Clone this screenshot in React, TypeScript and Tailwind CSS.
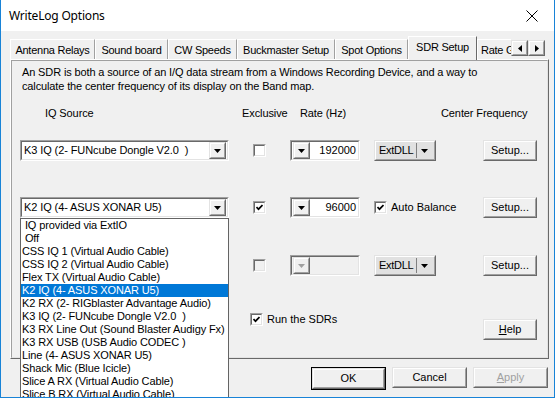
import React from 'react';

const sans = "font-['Liberation_Sans',Arial,sans-serif]";

const Tri = ({ disabled }: { disabled?: boolean }) => (
    <svg width="7" height="4" viewBox="0 0 7 4">
        <path d="M0 0H7L3.5 4Z" fill={disabled ? '#a0a0a0' : '#000'} />
    </svg>
);

const Raised: React.FC<{ className?: string; inner?: string; children?: React.ReactNode }> = ({ className = '', inner = '', children }) => (
    <div className={`border border-t-[#e3e3e3] border-l-[#e3e3e3] border-r-[#696969] border-b-[#696969] bg-[#f0f0f0] ${className}`}>
        <div className={`w-full h-full border border-t-white border-l-white border-r-[#a0a0a0] border-b-[#a0a0a0] flex items-center justify-center ${inner}`}>
            {children}
        </div>
    </div>
);

const Sunken: React.FC<{ className?: string; inner?: string; children?: React.ReactNode }> = ({ className = '', inner = '', children }) => (
    <div className={`border border-t-[#a0a0a0] border-l-[#a0a0a0] border-r-white border-b-white ${className}`}>
        <div className={`w-full h-full border border-t-[#696969] border-l-[#696969] border-r-[#e3e3e3] border-b-[#e3e3e3] flex items-center ${inner}`}>
            {children}
        </div>
    </div>
);

const Check = ({ checked, disabled }: { checked?: boolean; disabled?: boolean }) => (
    <Sunken className="w-[13px] h-[13px] shrink-0" inner={`justify-center ${disabled ? 'bg-[#f0f0f0]' : 'bg-white'}`}>
        {checked && (
            <svg width="7" height="7" viewBox="0 0 7 7">
                <polyline points="0.5,3 2.5,5.2 6.5,1" fill="none" stroke="#000" strokeWidth="1.7" />
            </svg>
        )}
    </Sunken>
);

const Combo = ({ value }: { value: string }) => (
    <Sunken className="w-[209px] h-[21px]" inner="bg-white pl-[2px] pr-[1px] justify-between">
        <span className="whitespace-pre tracking-[-0.1px]">{value}</span>
        <Raised className="w-[17px] h-[17px]"><Tri /></Raised>
    </Sunken>
);

const RateCombo = ({ value, disabled }: { value?: string; disabled?: boolean }) => (
    <Sunken className="w-[70px] h-[21px]" inner={`pl-[1px] pr-[2px] justify-between ${disabled ? 'bg-[#f0f0f0]' : 'bg-white'}`}>
        <Raised className="w-[17px] h-[17px]"><Tri disabled={disabled} /></Raised>
        <span>{value}</span>
    </Sunken>
);

const ExtDll = () => (
    <Raised className="w-[62px] h-[21px] bg-[#e1e1e1]" inner="bg-[#e1e1e1] justify-start pl-[3px]">
        <span className="tracking-[-0.3px]">ExtDLL</span>
        <span className="ml-[3px] w-px h-[15px] bg-[#808080]" />
        <span className="ml-[4px] flex"><Tri /></span>
    </Raised>
);

const Button = ({ children, className = '', disabled }: { children: React.ReactNode; className?: string; disabled?: boolean }) => (
    <Raised className={`h-[21px] ${className}`} inner={disabled ? 'text-[#a0a0a0]' : ''}>
        {children}
    </Raised>
);

const tabs = [
    { label: 'Antenna Relays', w: 'w-[85px]' },
    { label: 'Sound board', w: 'w-[73px]' },
    { label: 'CW Speeds', w: 'w-[69px]' },
    { label: 'Buckmaster Setup', w: 'w-[98px]' },
    { label: 'Spot Options', w: 'w-[73px]' },
];

const sources = [
    ' IQ provided via ExtIO',
    ' Off',
    'CSS IQ 1 (Virtual Audio Cable)',
    'CSS IQ 2 (Virtual Audio Cable)',
    'Flex TX (Virtual Audio Cable)',
    'K2 IQ (4- ASUS XONAR U5)',
    'K2 RX (2- RIGblaster Advantage Audio)',
    'K3 IQ (2- FUNcube Dongle V2.0  )',
    'K3 RX Line Out (Sound Blaster Audigy Fx)',
    'K3 RX USB (USB Audio CODEC )',
    'Line (4- ASUS XONAR U5)',
    'Shack Mic (Blue Icicle)',
    'Slice A RX (Virtual Audio Cable)',
    'Slice B RX (Virtual Audio Cable)',
];

export default function App() {
    return (
        <div className={`relative w-[555px] h-[398px] overflow-hidden bg-[#f0f0f0] border-l border-r border-b border-[#1883d7] text-[11px] text-black ${sans}`}>
            <div className="h-[31px] bg-white flex items-center justify-between pl-[8px] pr-[16px]">
                <span className="font-['Noto_Sans',sans-serif] text-[12px] tracking-[-0.2px]">WriteLog Options</span>
                <svg width="12" height="12" viewBox="0 0 12 12">
                    <path d="M0.5 0.5L11.5 11.5M11.5 0.5L0.5 11.5" stroke="#000" strokeWidth="1" />
                </svg>
            </div>

            <div className="relative h-[28px] flex items-end pl-[9px] z-10">
                {tabs.map(t => (
                    <div key={t.label} className={`${t.w} h-[20px] flex items-center justify-center pt-[1px] border-t border-l border-white border-r border-r-[#a0a0a0] tracking-[-0.25px]`}>
                        {t.label}
                    </div>
                ))}
                <div className="w-[69px] h-[24px] -mb-px pb-[2px] flex items-center justify-center bg-[#f0f0f0] border-t border-l border-white border-r border-r-[#696969] tracking-[-0.25px]">
                    SDR Setup
                </div>
                <div className="w-[34px] h-[20px] flex items-center pl-[3px] pt-[1px] border-t border-l border-white overflow-hidden whitespace-nowrap tracking-[-0.25px]">
                    Rate G
                </div>
                <div className="absolute left-[510px] top-[9px] flex">
                    <Raised className="w-[17px] h-[16px]">
                        <svg width="4" height="7" viewBox="0 0 4 7"><path d="M4 0V7L0 3.5Z" fill="#000" /></svg>
                    </Raised>
                    <Raised className="w-[17px] h-[16px]">
                        <svg width="4" height="7" viewBox="0 0 4 7"><path d="M0 0V7L4 3.5Z" fill="#000" /></svg>
                    </Raised>
                </div>
            </div>

            <div className="ml-[9px] w-[539px] h-[300px] border border-t-white border-l-white border-r-[#696969] border-b-[#696969]">
                <div className="w-full h-full border border-t-[#a0a0a0] border-l-[#a0a0a0] border-r-[#e3e3e3] border-b-[#e3e3e3] pl-[8px] pt-[4px]">
                    <p className="ml-[2px] leading-[14px] tracking-[-0.13px]">
                        An SDR is both a source of an I/Q data stream from a Windows Recording Device, and a way to<br />
                        calculate the center frequency of its display on the Band map.
                    </p>

                    <div className="mt-[13px] flex leading-[14px] tracking-[-0.1px]">
                        <span className="ml-[25px] w-[197px]">IQ Source</span>
                        <span className="w-[58px]">Exclusive</span>
                        <span className="w-[141px]">Rate (Hz)</span>
                        <span>Center Frequency</span>
                    </div>

                    <div className="mt-[20px] flex items-center">
                        <div className="w-[233px]"><Combo value="K3 IQ (2- FUNcube Dongle V2.0  )" /></div>
                        <div className="w-[37px]"><Check /></div>
                        <div className="w-[84px]"><RateCombo value="192000" /></div>
                        <div className="w-[109px]"><ExtDll /></div>
                        <Button className="w-[54px]">Setup...</Button>
                    </div>

                    <div className="mt-[36px] flex items-center">
                        <div className="w-[233px]"><Combo value="K2 IQ (4- ASUS XONAR U5)" /></div>
                        <div className="w-[37px]"><Check checked /></div>
                        <div className="w-[84px]"><RateCombo value="96000" /></div>
                        <div className="w-[109px] flex items-center gap-[4px]"><Check checked /><span>Auto Balance</span></div>
                        <Button className="w-[54px]">Setup...</Button>
                    </div>

                    <div className="mt-[37px] flex items-center">
                        <div className="w-[233px]" />
                        <div className="w-[37px]"><Check disabled /></div>
                        <div className="w-[84px]"><RateCombo disabled /></div>
                        <div className="w-[109px]"><ExtDll /></div>
                        <Button className="w-[54px]">Setup...</Button>
                    </div>

                    <div className="mt-[35px] flex items-start">
                        <div className="ml-[230px] w-[233px] flex items-center gap-[4px]"><Check checked /><span>Run the SDRs</span></div>
                        <Button className="w-[54px] mt-[8px]"><span><span className="underline">H</span>elp</span></Button>
                    </div>
                </div>
            </div>

            <div className="mt-[8px] flex justify-end gap-[6px] pr-[6px]">
                <div className="border border-[#000]">
                    <Button className="w-[73px] h-[19px]">OK</Button>
                </div>
                <Button className="w-[75px]">Cancel</Button>
                <Button className="w-[75px]" disabled><span><span className="underline">A</span>pply</span></Button>
            </div>

            <div className="absolute left-[19px] top-[218px] w-[209px] bg-white border border-[#646464] z-20">
                {sources.map(s => (
                    <div key={s} className={`h-[13px] leading-[13px] px-[1px] whitespace-pre tracking-[-0.12px] ${s === 'K2 IQ (4- ASUS XONAR U5)' ? 'bg-[#0078d7] text-white' : ''}`}>
                        {s}
                    </div>
                ))}
            </div>
        </div>
    );
}
